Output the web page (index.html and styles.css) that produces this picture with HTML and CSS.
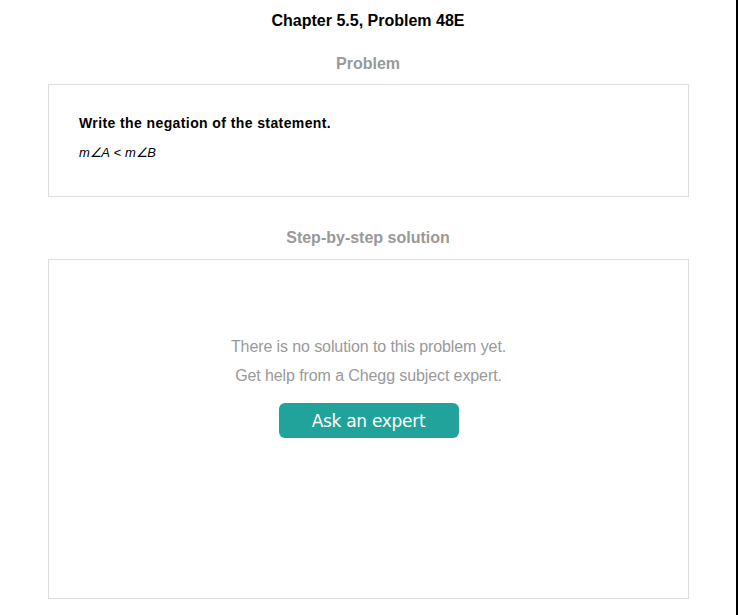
FILE: index.html
```html
<!DOCTYPE html>
<html>
<head>
<meta charset="utf-8">
<link rel="stylesheet" href="styles.css">
</head>
<body>
<div class="page">
  <h1 class="title">Chapter 5.5, Problem 48E</h1>
  <h2 class="section-title">Problem</h2>
  <div class="card problem-card">
    <p class="problem-text">Write the negation of the statement.</p>
    <p class="problem-math">m∠A &lt; m∠B</p>
  </div>
  <h2 class="section-title solution-title">Step-by-step solution</h2>
  <div class="card solution-card">
    <p class="empty-line">There is no solution to this problem yet.</p>
    <p class="empty-line">Get help from a Chegg subject expert.</p>
    <button class="ask-btn">Ask an expert</button>
  </div>
</div>
</body>
</html>
```
FILE: styles.css
```css
html, body {
  margin: 0;
  padding: 0;
  background: #fff;
}
.page {
  width: 736px;
  min-height: 615px;
  border-right: 2px solid #000;
  font-family: "Liberation Sans", Arial, sans-serif;
  box-sizing: content-box;
  padding-top: 11px;
}
.title {
  margin: 0;
  font-size: 16px;
  font-weight: bold;
  color: #000;
  text-align: center;
  line-height: 20px;
}
.section-title {
  margin: 23px 0 0;
  font-size: 16px;
  font-weight: bold;
  color: #999;
  text-align: center;
  line-height: 20px;
}
.card {
  margin: 0 47px 0 48px;
  border: 1px solid #ddd;
  box-sizing: border-box;
}
.problem-card {
  margin-top: 10px;
  height: 113px;
  padding: 30px 30px 0;
}
.problem-text {
  margin: 0;
  font-size: 14px;
  font-weight: bold;
  line-height: 16px;
  letter-spacing: 0.4px;
  color: #000;
}
.problem-math {
  margin: 14px 0 0;
  font-size: 13px;
  font-style: italic;
  line-height: 16px;
  letter-spacing: -0.3px;
  word-spacing: 1px;
  color: #000;
}
.solution-title {
  margin-top: 31px;
}
.solution-card {
  margin-top: 11px;
  height: 340px;
  padding-top: 77px;
  display: flex;
  flex-direction: column;
  align-items: center;
}
.empty-line {
  margin: 0 0 10px;
  font-size: 16px;
  line-height: 19px;
  letter-spacing: -0.1px;
  color: #999;
}
.ask-btn {
  margin-top: 8px;
  width: 180px;
  height: 35px;
  border: none;
  border-radius: 6px;
  background: #21a39b;
  color: #fff;
  font-family: "DejaVu Sans", Verdana, sans-serif;
  font-size: 17px;
  padding: 0;
  letter-spacing: -0.3px;
}
```
